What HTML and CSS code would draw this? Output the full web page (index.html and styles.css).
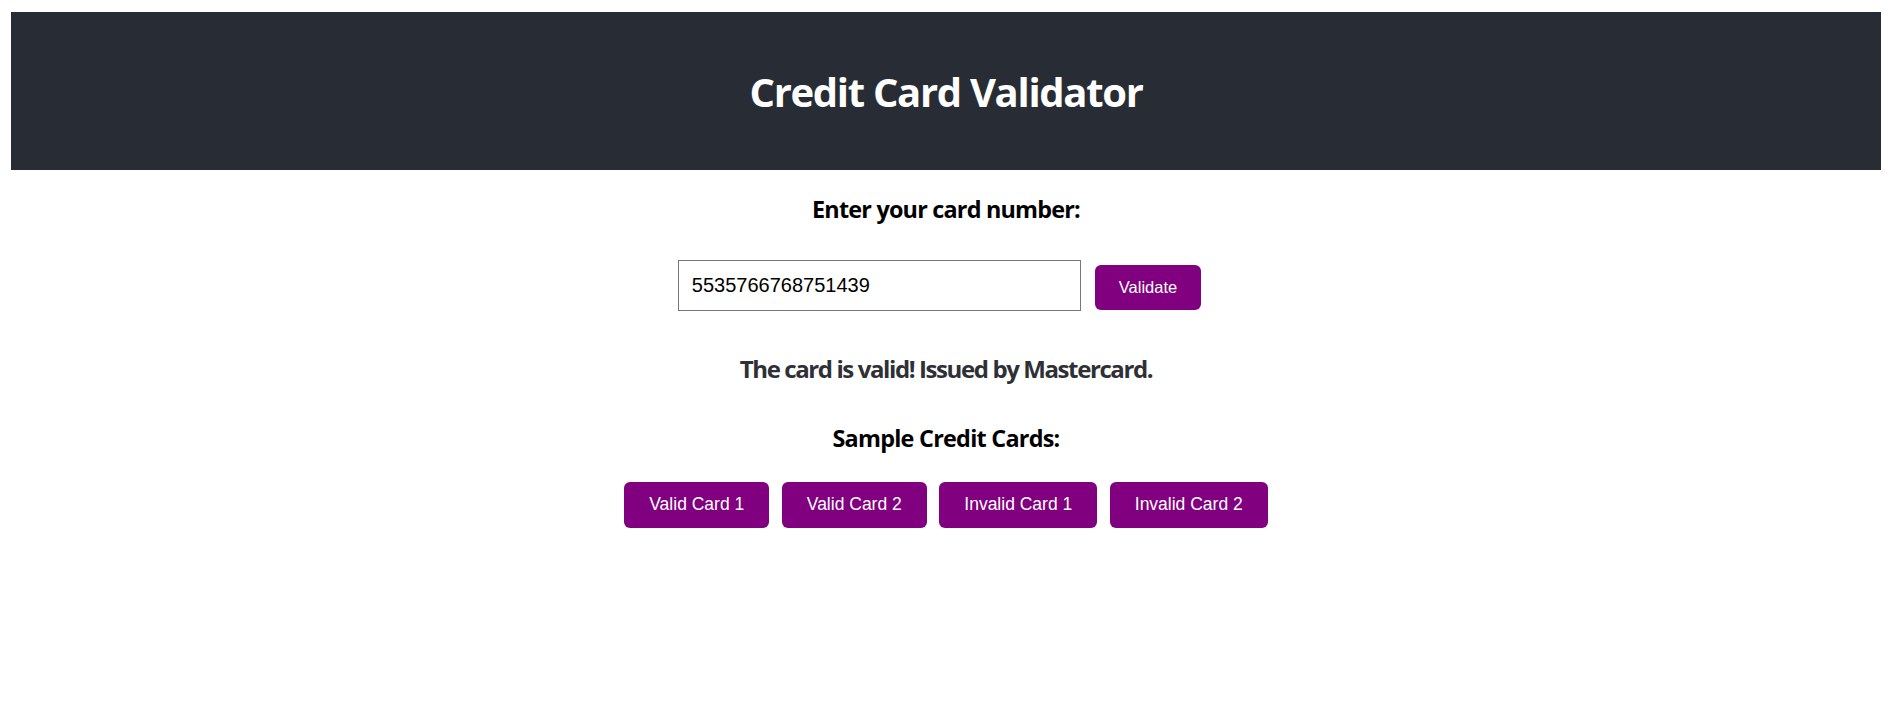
FILE: index.html
```html
<!DOCTYPE html>
<html lang="en">
<head>
<meta charset="utf-8">
<title>Credit Card Validator</title>
<link rel="stylesheet" href="styles.css">
</head>
<body>
<div class="app">
  <header class="app-header">
    <h1 class="title">Credit Card Validator</h1>
  </header>
  <main class="content">
    <h3 class="label">Enter your card number:</h3>
    <div class="input-row">
      <input class="card-input" type="text" value="5535766768751439">
      <button class="btn validate">Validate</button>
    </div>
    <p class="result">The card is valid! Issued by Mastercard.</p>
    <h3 class="samples-title">Sample Credit Cards:</h3>
    <div class="samples">
      <button class="btn sample">Valid Card 1</button>
      <button class="btn sample">Valid Card 2</button>
      <button class="btn sample">Invalid Card 1</button>
      <button class="btn sample">Invalid Card 2</button>
    </div>
  </main>
</div>
</body>
</html>
```
FILE: styles.css
```css
html, body {
  background: #ffffff;
}
body {
  margin: 0;
  padding: 12px 16px 0 11px;
  font-family: "Open Sans", "Noto Sans", sans-serif;
  color: #000;
}
.app-header {
  background: #282c34;
  padding: 25px;
  text-align: center;
}
.title {
  margin: 28.4px 0 26.2px;
  font-size: 40px;
  line-height: 53.2px;
  font-weight: 700;
  letter-spacing: -1.3px;
  color: #ffffff;
}
.content {
  display: flex;
  flex-direction: column;
  align-items: center;
}
.label,
.samples-title {
  font-size: 23.4px;
  line-height: 31.1px;
  font-weight: 700;
  color: #000;
}
.label {
  margin: 24.4px 0 0;
  letter-spacing: -0.8px;
}
.input-row {
  display: flex;
  align-items: flex-end;
  margin-top: 34.9px;
}
.card-input {
  box-sizing: border-box;
  width: 403px;
  height: 51px;
  padding: 0 13px;
  border: 1px solid #767676;
  border-radius: 0;
  font-family: "Liberation Sans", Arial, sans-serif;
  font-size: 20px;
  color: #000;
  background: #fff;
  outline: none;
}
.btn {
  background: #800080;
  color: #ffffff;
  border: none;
  border-radius: 6px;
  font-family: "Liberation Sans", Arial, sans-serif;
  cursor: pointer;
}
.validate {
  height: 45px;
  margin: 0 13px 1px 14px;
  padding: 0 24px;
  font-size: 16.5px;
}
.result {
  margin: 42px 0 0;
  font-size: 24px;
  line-height: 32px;
  font-weight: 700;
  letter-spacing: -1.4px;
  color: #2e3036;
}
.samples-title {
  margin: 37.4px 0 0;
  letter-spacing: -0.75px;
}
.samples {
  display: flex;
  gap: 12.5px;
  margin-top: 28px;
}
.sample {
  height: 46px;
  padding: 0 25px;
  font-size: 17.5px;
}
```
